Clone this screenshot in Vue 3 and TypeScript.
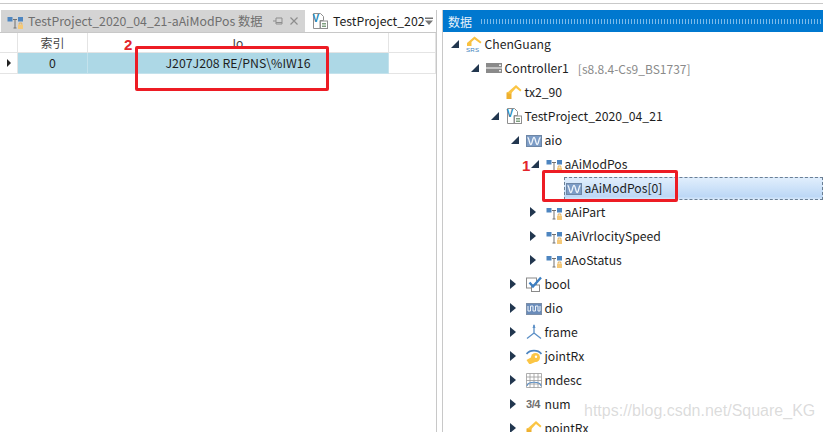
<template>
  <div class="page">
    <section class="left">
      <div class="tabs">
        <div class="tab inactive">
          <svg class="ico" viewBox="0 0 16 16"><use href="#i-struct" /></svg>
          <span class="tab-title">TestProject_2020_04_21-aAiModPos 数据</span>
          <svg class="pin" viewBox="0 0 12 10"><path d="M1 5h3M4 2v6M4 2h6v6H4M4 6.500h6" fill="none" stroke="#8d8d8d" /></svg>
          <svg class="tab-x" viewBox="0 0 8 8"><path d="M.5 .5l7 7M7.500 .5l-7 7" fill="none" stroke="#8d8d8d" stroke-width="1.200" /></svg>
        </div>
        <div class="tab active">
          <svg class="ico" viewBox="0 0 16 16">
            <use href="#i-project" />
            <text x="0.500" y="9" class="v-glyph">V</text>
          </svg>
          <span class="tab-title">TestProject_202</span>
        </div>
        <svg class="tab-menu" viewBox="0 0 8 8"><path d="M0 .5h8v1.500H0zM0 3.500h8L4 8z" fill="#777" /></svg>
      </div>
      <div class="grid">
        <div class="grid-row head">
          <div class="cell gutter"></div>
          <div class="cell idx">索引</div>
          <div class="cell io">Io</div>
          <div class="cell rest"></div>
        </div>
        <div class="grid-row data">
          <div class="cell gutter"><i class="arrow-small"></i></div>
          <div class="cell idx sel">0</div>
          <div class="cell io sel">J207J208 RE/PNS\%IW16</div>
          <div class="cell rest"></div>
        </div>
      </div>
      <span class="mark mark-2">2</span>
      <div class="redbox box-2"></div>
    </section>

    <section class="right">
      <div class="panel-head">
        <span>数据</span>
        <div class="dots"></div>
      </div>
      <ul class="tree">
        <li
          v-for="n in nodes"
          :key="n.label"
          class="node"
          :class="{ current: n.current }"
          :style="{ paddingLeft: n.level * 20 + 'px' }"
        >
          <span class="twisty" :class="n.open === undefined ? '' : n.open ? 'open' : 'closed'"></span>
          <span v-if="n.icon === 'num'" class="num-glyph">3/4</span>
          <svg v-else-if="n.icon === 'srs'" class="ico" viewBox="0 0 16 16">
            <path d="M1 10V7L8.500 .5 15.500 6l-1.200 1.400-5.800-4.200L5.500 6v4z" fill="#f9c140" />
            <text x="0" y="16" class="srs-glyph">SRS</text>
          </svg>
          <svg v-else-if="n.icon === 'project'" class="ico" viewBox="0 0 16 16">
            <use href="#i-project" />
            <text x="0.500" y="9" class="v-glyph">V</text>
          </svg>
          <svg v-else class="ico" viewBox="0 0 16 16"><use :href="'#i-' + n.icon" /></svg>
          <span class="label">{{ n.label }}</span>
          <span v-if="n.note" class="note">{{ n.note }}</span>
        </li>
      </ul>
      <span class="mark mark-1">1</span>
      <div class="redbox box-1"></div>
    </section>

    <span class="watermark">https://blog.csdn.net/Square_KG</span>

    <svg class="defs" width="0" height="0">
      <symbol id="i-robot" viewBox="0 0 16 16">
        <path d="M.5 15V8.500l5-1V15z" fill="#eeb02f" />
        <path d="M1 9L10 1l5.500 5-1.200 1.500L10 4 4.500 10z" fill="#fbc544" />
      </symbol>
      <symbol id="i-controller" viewBox="0 0 16 16">
        <rect x="0" y="3" width="16" height="4.500" fill="#8a8a8a" />
        <rect x="0" y="8.500" width="16" height="4.500" fill="#8a8a8a" />
        <rect x="13" y="4.500" width="2" height="1.500" fill="#eee" />
        <rect x="13" y="10" width="2" height="1.500" fill="#eee" />
      </symbol>
      <symbol id="i-project" viewBox="0 0 16 16">
        <path d="M1.500 .5h7l3 3v4H8v8H1.500z" fill="#fff" stroke="#8f8f8f" />
        <rect x="8.500" y="8" width="7" height="7.500" fill="#fff" stroke="#8f8f8f" />
        <path d="M10 10.500h4M10 12h4M10 13.500h4" stroke="#7f9f7f" />
      </symbol>
      <symbol id="i-wave" viewBox="0 0 16 16">
        <rect x=".5" y="3.500" width="15" height="11" fill="#7c9cc6" stroke="#6d86a6" />
        <path d="M1.500 5.500c1.800 0 1.800 7 3.300 7S6.500 5.500 8 5.500s1.700 7 3.200 7 1.500-7 3.300-7" fill="none" stroke="#eef4fa" stroke-width="1.300" />
      </symbol>
      <symbol id="i-struct" viewBox="0 0 16 16">
        <rect x=".5" y="4" width="5" height="4.500" fill="#4d85c0" />
        <rect x="11" y="4" width="5" height="4.500" fill="#4d85c0" />
        <path d="M6 6.500h4M8 6.500v8.500M6.500 15h3" fill="none" stroke="#707070" />
        <rect x="11" y="11.500" width="5" height="4.500" rx=".6" fill="#f5c978" />
        <path d="M12.200 11.500V10h2.600v1.500" fill="none" stroke="#e0b060" />
      </symbol>
      <symbol id="i-bool" viewBox="0 0 16 16">
        <rect x=".5" y="2" width="10" height="10" fill="#fff" stroke="#8a8a8a" />
        <rect x="5.500" y="9" width="8" height="6.500" fill="#fff" stroke="#8a8a8a" />
        <path d="M3.500 6.500L7 10.500 15 1.500" fill="none" stroke="#3d7fc2" stroke-width="2.400" />
      </symbol>
      <symbol id="i-dio" viewBox="0 0 16 16">
        <rect x=".5" y="3.500" width="15" height="11" fill="#6a8cba" stroke="#7b8ea8" />
        <path d="M2 6v5h2.500V6H7v5h2.500V6H12v5h2V6" fill="none" stroke="#eef4fa" />
      </symbol>
      <symbol id="i-frame" viewBox="0 0 16 16">
        <path d="M8 1v8M8 9L1 14.500M8 9l7 5.500" fill="none" stroke="#5b8fc6" stroke-width="1.300" />
        <path d="M8 0L6.500 4h3z" fill="#5b8fc6" />
      </symbol>
      <symbol id="i-joint" viewBox="0 0 16 16">
        <path d="M.5 6C4 1.500 12 1.500 15.500 6" fill="none" stroke="#4d85c0" stroke-width="1.700" />
        <circle cx="9.500" cy="9.500" r="4.500" fill="#fbc544" />
        <path d="M7.500 8L.5 12 3.500 16.500l8-3.500z" fill="#fbc544" />
        <circle cx="10" cy="8.800" r="1.200" fill="#fff" />
      </symbol>
      <symbol id="i-mdesc" viewBox="0 0 16 16">
        <path d="M.5 1.500h15v14H.5zM4 1.500v14M8 1.500v14M12 1.500v14M.5 5h15M.5 8.500h15M.5 12h15" fill="#fff" stroke="#9a9a9a" stroke-width=".8" />
        <path d="M1 14c1-5 13-5 14 0" fill="none" stroke="#5b8fc6" stroke-width="1.100" />
      </symbol>
    </svg>
  </div>
</template>

<script setup lang="ts">
type TreeNode = {
  label: string
  level: number
  icon: string
  open?: boolean
  note?: string
  current?: boolean
}

const nodes: TreeNode[] = [
  { label: 'ChenGuang', level: 0, icon: 'srs', open: true },
  { label: 'Controller1', level: 1, icon: 'controller', open: true, note: '[s8.8.4-Cs9_BS1737]' },
  { label: 'tx2_90', level: 2, icon: 'robot' },
  { label: 'TestProject_2020_04_21', level: 2, icon: 'project', open: true },
  { label: 'aio', level: 3, icon: 'wave', open: true },
  { label: 'aAiModPos', level: 4, icon: 'struct', open: true },
  { label: 'aAiModPos[0]', level: 5, icon: 'wave', current: true },
  { label: 'aAiPart', level: 4, icon: 'struct', open: false },
  { label: 'aAiVrlocitySpeed', level: 4, icon: 'struct', open: false },
  { label: 'aAoStatus', level: 4, icon: 'struct', open: false },
  { label: 'bool', level: 3, icon: 'bool', open: false },
  { label: 'dio', level: 3, icon: 'dio', open: false },
  { label: 'frame', level: 3, icon: 'frame', open: false },
  { label: 'jointRx', level: 3, icon: 'joint', open: false },
  { label: 'mdesc', level: 3, icon: 'mdesc', open: false },
  { label: 'num', level: 3, icon: 'num', open: false },
  { label: 'pointRx', level: 3, icon: 'robot', open: false },
]
</script>

<style>
html, body { margin: 0; background: #fff; overflow: hidden; }
</style>

<style scoped>
.page {
  position: relative;
  width: 823px;
  height: 432px;
  overflow: hidden;
  display: flex;
  gap: 6px;
  box-sizing: border-box;
  padding-top: 10px;
  font-family: "Noto Sans CJK SC", "Noto Sans", sans-serif;
  font-size: 12px;
  color: #1e1e1e;
  background: #fff;
}
.page::before {
  content: "";
  position: absolute;
  left: 0; right: 0; top: 3px;
  height: 1px;
  background: #c9c9c9;
}
.left {
  position: relative;
  width: 437px;
  flex: none;
  box-sizing: border-box;
  border-right: 1px solid #c8c8c8;
}
.tabs { display: flex; height: 22px; align-items: stretch; padding-left: 1px; font-size: 12.3px; }
.tab { display: flex; align-items: center; white-space: nowrap; box-sizing: border-box; }
.tab.inactive { background: #d4d4d4; width: 304px; padding-left: 6px; color: #6f6f6f; }
.tab.active { background: #fff; padding-left: 7px; width: 118px; color: #1e1e1e; }
.tab .ico { margin-right: 5px; }
.pin { width: 12px; height: 10px; margin-left: 9px; flex: none; }
.tab-x { width: 8px; height: 8px; margin-left: 6px; flex: none; }
.tab-menu { align-self: center; width: 8px; height: 8px; margin-left: 2px; flex: none; }
.grid { border-top: 1px solid #c8c8c8; }
.grid-row { display: flex; height: 21px; }
.grid-row.head { height: 20px; }
.cell {
  display: flex;
  align-items: center;
  justify-content: center;
  box-sizing: border-box;
  border-right: 1px solid #e4e4e4;
  border-bottom: 1px solid #e4e4e4;
}
.gutter { width: 18px; }
.idx { width: 70px; color: #444; }
.io { width: 301px; color: #444; }
.rest { width: 47px; }
.data .cell { color: #1e1e1e; font-size: 12.3px; }
.sel { background: #add8e6; border-color: #c4e2ec; }
.arrow-small {
  width: 0; height: 0;
  border-top: 4px solid transparent;
  border-bottom: 4px solid transparent;
  border-left: 4px solid #222;
}
.right { position: relative; flex: 1; min-width: 0; border-left: 1px solid #c8c8c8; margin-left: -1px; }
.panel-head {
  height: 22px;
  display: flex;
  align-items: center;
  gap: 8px;
  padding-left: 5px;
  background: #0078cf;
  color: #e8f2fb;
}
.dots {
  flex: 1;
  height: 5px;
  margin-right: 1px;
  background-image: radial-gradient(circle, #7dbbea 0.6px, transparent 0.8px);
  background-size: 3px 2px;
}
.tree { list-style: none; margin: 0; padding: 0 0 0 4px; }
.node { position: relative; display: flex; align-items: center; height: 24px; white-space: nowrap; }
.node.current::before {
  content: "";
  position: absolute;
  left: 117px;
  right: 0;
  top: 1px;
  bottom: 0;
  box-sizing: border-box;
  border: 1px dashed #6a7f95;
  background: linear-gradient(#e0eefc, #bdd8f6 88%, #d4e6fa);
}
.node > * { position: relative; }
.twisty { width: 19px; height: 8px; flex: none; box-sizing: border-box; }
.twisty.open {
  width: 8px;
  height: 8px;
  margin: 0 7px 0 4px;
  background: #22374f;
  clip-path: polygon(100% 0, 100% 100%, 0 100%);
}
.twisty.closed {
  width: 6px;
  height: 10px;
  margin: 0 10px 0 3px;
  background: #22374f;
  clip-path: polygon(0 0, 100% 50%, 0 100%);
}
.ico { width: 16px; height: 16px; flex: none; }
.node .ico { margin: 0 2.500px 0 0; }
.label { line-height: 20px; font-size: 12.2px; }
.note { margin-left: 9px; color: #8a8a8a; }
.mark { position: absolute; color: #e3242b; font-family: "Liberation Sans", sans-serif; font-weight: 700; font-size: 15px; line-height: 1; }
.mark-2 { left: 124px; top: 27px; }
.mark-1 { left: 79px; top: 148px; }
.redbox { position: absolute; border: 3px solid #ed1c24; border-radius: 2px; box-sizing: border-box; }
.box-2 { left: 135px; top: 36px; width: 194px; height: 45px; }
.box-1 { left: 99px; top: 160px; width: 136px; height: 32px; }
.watermark {
  position: absolute;
  left: 584px;
  top: 402px;
  font-family: "Liberation Sans", sans-serif;
  font-size: 16px;
  color: rgba(170, 170, 170, .42);
}
.defs { position: absolute; }
.num-glyph {
  width: 16px;
  margin-right: 2.500px;
  flex: none;
  font-family: "Liberation Sans", sans-serif;
  font-size: 11px;
  font-weight: 700;
  letter-spacing: -0.4px;
  color: #6e6e6e;
}
.srs-glyph { font-family: "Liberation Sans", sans-serif; font-size: 6.200px; font-weight: 400; fill: #3f7fbd; letter-spacing: .2px; }
.v-glyph { font-family: "Liberation Sans", sans-serif; font-size: 10px; font-weight: 700; fill: #1f86b4; }
</style>
